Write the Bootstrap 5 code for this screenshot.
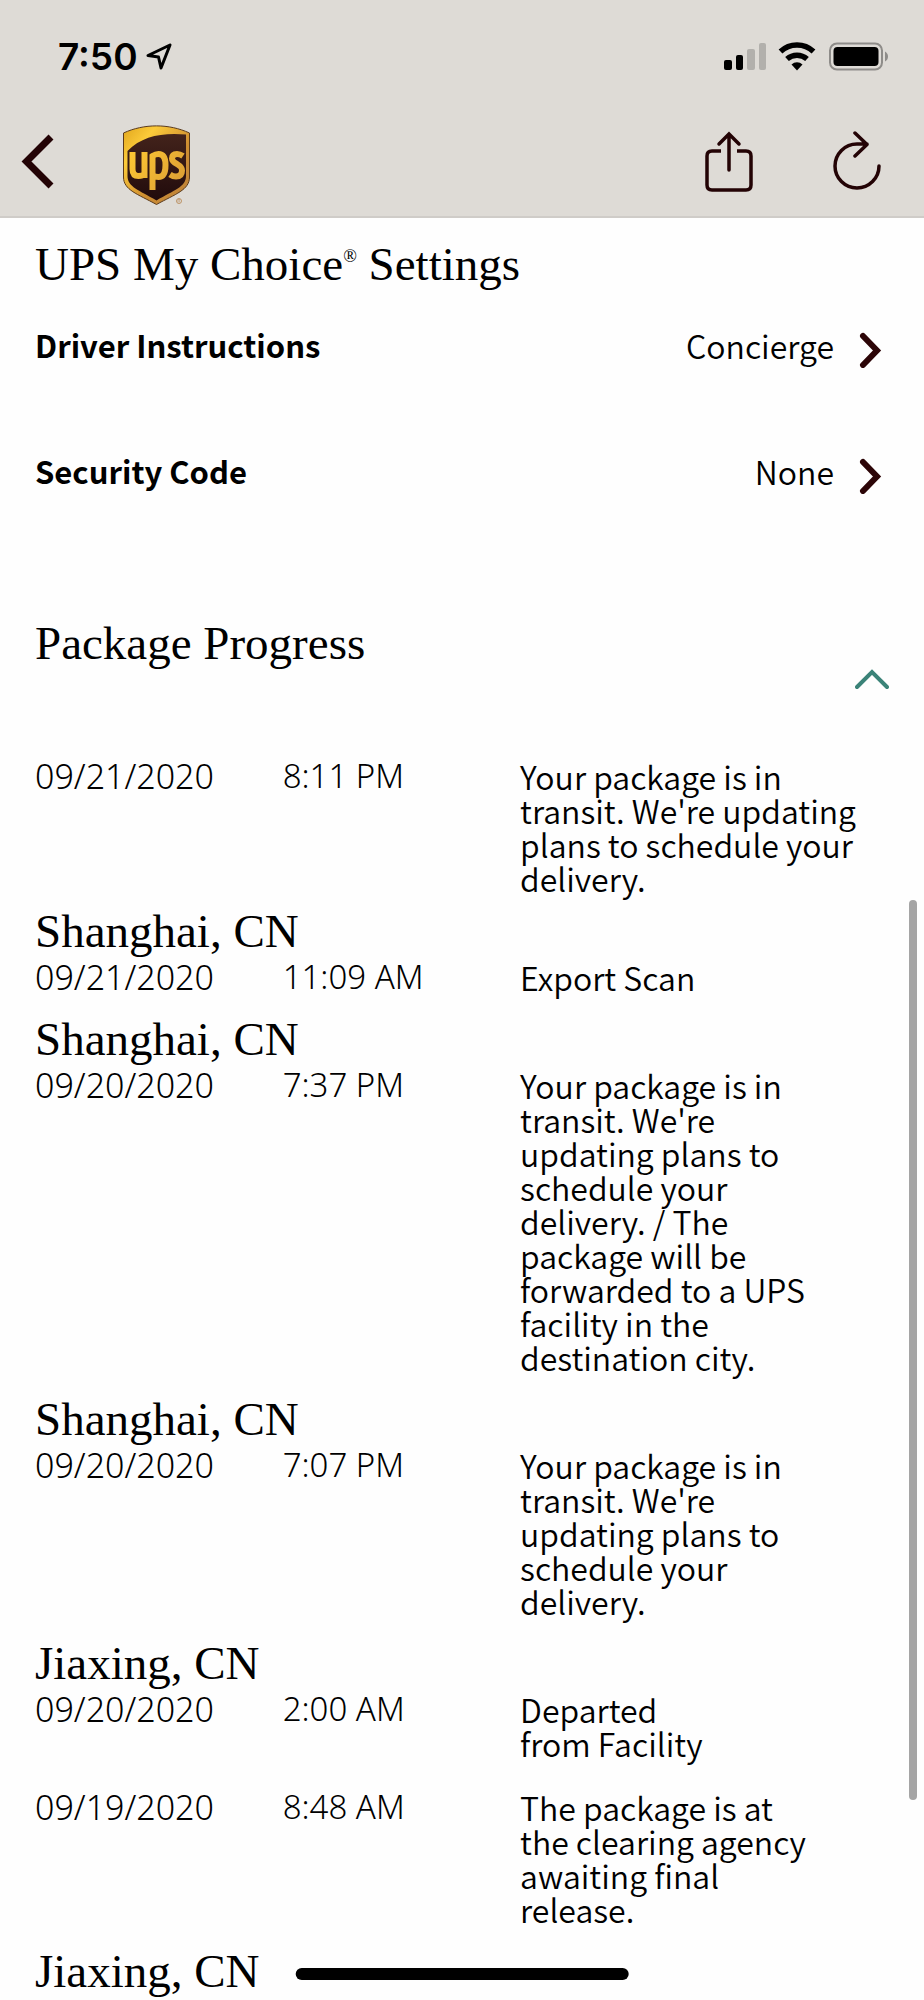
<!DOCTYPE html>
<html lang="en">
<head>
<meta charset="utf-8">
<meta name="viewport" content="width=device-width, initial-scale=1">
<title>UPS My Choice – Package Progress</title>
<link href="https://cdn.jsdelivr.net/npm/bootstrap@5.3.0/dist/css/bootstrap.min.css" rel="stylesheet">
<style>
  body { background: #fefefe; color: #000; font-family: "Noto Sans CJK SC", "Noto Sans", sans-serif; font-size: 32px; font-weight: 350; line-height: 34px; overflow-x: hidden; }
  svg { display: block; flex: none; }
  .app-header { background: #dedbd6; border-bottom: 2px solid #cfccc8; }
  .status-bar { height: 114px; padding: 0 35px 0 58px; font-family: Inter, sans-serif; font-size: 37px; font-weight: 600; }
  .tool-bar { height: 102px; padding: 0 42px 0 18px; }
  .tool-bar button, .toggle-btn { background: none; border: 0; padding: 0; color: #230305; }
  .tool-bar button { padding-bottom: 7px; }
  .refresh-btn { margin-left: 78px; }
  .app-main { padding: 18px 35px 0; }
  .serif-title { font-family: "Liberation Serif", serif; font-size: 47px; font-weight: 400; line-height: 56px; margin: 0; }
  .serif-title sup { font-size: 18px; line-height: 0; vertical-align: 18px; top: 0; }
  .setting-row { color: #000; text-decoration: none; height: 126px; padding: 36px 7px 0 0; }
  .setting-row b { font-weight: 700; font-size: 31px; }
  .setting-row svg { margin-top: 4px; }
  .progress-head { padding-top: 71px; min-height: 215px; }
  .toggle-btn { margin-top: 53px; color: #3b8378; }
  .progress-table { width: 100%; table-layout: fixed; }
  .progress-table th { font-weight: 400; padding: 17px 0 1px; }
  .progress-table .city-first th { padding: 8px 0 1px; }
  .progress-table td { padding: 0; vertical-align: top; }
  .progress-table .no-city td { padding-bottom: 30px; }
  .progress-table .stamp { font-family: "Noto Sans", sans-serif; font-size: 33px; font-weight: 300; }
  .progress-table .stamp-date { font-size: 34px; }
  .col-date { width: 29%; }
  .col-time { width: 27.8%; }
  .desc-narrow { max-width: 300px; }
  .scroll-thumb { top: 45%; right: 7px; width: 8px; height: 45%; background: #a5a5a5; }
  .home-bar { bottom: 20px; width: 36%; height: 12px; background: #000; }
</style>
</head>
<body>
<header class="app-header">
  <div class="status-bar d-flex align-items-center justify-content-between">
    <div class="d-flex align-items-center gap-2">
      <span>7:50</span>
      <svg width="28" height="28" viewBox="0 0 28 28" fill="none" stroke="#000" stroke-width="3" stroke-linejoin="round" aria-hidden="true"><path d="M24 2 2 12.500 12.500 14 15 25Z"/></svg>
    </div>
    <svg width="165" height="30" viewBox="0 0 165 30" aria-label="Signal, Wi-Fi and battery">
      <rect x="0" y="18" width="8" height="10" rx="2"/>
      <rect x="12" y="13" width="7" height="15" rx="2"/>
      <rect x="23" y="7" width="8" height="21" rx="2" fill="#b2b0ac"/>
      <rect x="35" y="1" width="7" height="27" rx="2" fill="#b2b0ac"/>
      <g fill="none" stroke="#000" stroke-width="5.500">
        <path d="M56.500 9.500a24 24 0 0 1 33 0"/>
        <path d="M63 17a15 15 0 0 1 20 0"/>
      </g>
      <path d="M73 28.500 67.500 22.500a8 8 0 0 1 11 0Z"/>
      <rect x="106" y="1.500" width="52" height="26" rx="7" fill="none" stroke="#8e8c89" stroke-width="2"/>
      <rect x="109.500" y="5" width="45" height="19" rx="4"/>
      <path d="M161 9.500c4 2 4 8 0 10Z" fill="#8e8c89"/>
    </svg>
  </div>
  <nav class="tool-bar d-flex align-items-center" aria-label="Toolbar">
    <button type="button" aria-label="Back"><svg width="40" height="60" viewBox="0 0 40 60" fill="none" stroke="currentColor" stroke-width="7"><path d="M33 5 8.500 29.500 33 54"/></svg></button>
    <svg class="ms-5" width="90" height="90" viewBox="0 0 90 90" role="img" aria-label="UPS">
      <defs>
        <linearGradient id="gold" x1="0" y1="0" x2="1" y2="1"><stop offset="0" stop-color="#e0a51c"/><stop offset=".25" stop-color="#fccb3a"/><stop offset=".6" stop-color="#cf8e31"/><stop offset="1" stop-color="#b9803c"/></linearGradient>
        <linearGradient id="letters" gradientUnits="userSpaceOnUse" x1="24" y1="30" x2="80" y2="70"><stop offset="0" stop-color="#ffc933"/><stop offset="1" stop-color="#d79a35"/></linearGradient>
        <linearGradient id="brown" x1="0" y1="0" x2="0" y2="1"><stop offset="0" stop-color="#43231b"/><stop offset="1" stop-color="#210b0c"/></linearGradient>
      </defs>
      <path d="M17.500 13C38 3.500 63 3.500 83.500 13v44c0 13-14 17-33 27.500C31.500 74 17.500 70 17.500 57Z" fill="url(#gold)" stroke="#5a3a1c"/>
      <path d="M21.500 31C36 16 56 12.500 80 14.500V56c0 11-12 14-29.500 24.500C33 70 21.500 67 21.500 56Z" fill="url(#brown)"/>
      <g fill="none" stroke="url(#letters)" stroke-width="6">
        <path d="M26.500 32v17q0 7 6 7 4 0 6-2M38.500 32v26"/>
        <path d="M46.500 70V36q3-2 6-2 7 0 7 11 0 12-7 12-3 0-6-2"/>
        <path d="M77 36q-3-2-6-2-5 0-5 4.500 0 3 5 5.500 5 3 5 6.500 0 6-6 6-3 0-6-2"/>
      </g>
      <circle cx="73" cy="81" r="2.500" fill="none" stroke="#bd9569"/><path d="M72 82.500v-3h2l-1 1.500 1 1.500" fill="none" stroke="#bd9569" stroke-width=".6"/>
    </svg>
    <button type="button" class="ms-auto" aria-label="Share"><svg width="50" height="62" viewBox="0 0 50 62" fill="none" stroke="currentColor" stroke-width="3.500" stroke-linecap="round"><path stroke-linecap="butt" d="M17 20H8q-5 0-5 5v29q0 5 5 5h34q5 0 5-5V25q0-5-5-5h-9"/><path d="M25 39V3M15 13 25 3l10 10"/></svg></button>
    <button type="button" class="refresh-btn" aria-label="Refresh"><svg width="50" height="62" viewBox="0 0 50 62" fill="none" stroke="currentColor" stroke-width="3.500" stroke-linecap="round" stroke-linejoin="round"><path d="M47 35a22 22 0 1 1-22-22h10M23 2l12 11.500L23 25"/></svg></button>
  </nav>
</header>

<main class="app-main">
  <section>
    <h1 class="serif-title">UPS My Choice<sup>®</sup> Settings</h1>
    <a href="#driver" class="setting-row d-flex align-items-start">
      <b>Driver Instructions</b><span class="ms-auto me-4">Concierge</span>
      <svg width="24" height="36" viewBox="0 0 24 36" fill="none" stroke="#2c0507" stroke-width="6" stroke-linecap="round"><path d="M5 4 19 18.500 5 33"/></svg>
    </a>
    <a href="#security" class="setting-row d-flex align-items-start">
      <b>Security Code</b><span class="ms-auto me-4">None</span>
      <svg width="24" height="36" viewBox="0 0 24 36" fill="none" stroke="#2c0507" stroke-width="6" stroke-linecap="round"><path d="M5 4 19 18.500 5 33"/></svg>
    </a>
  </section>

  <section>
    <div class="progress-head d-flex justify-content-between align-items-start">
      <h2 class="serif-title">Package Progress</h2>
      <button type="button" class="toggle-btn" aria-label="Collapse package progress" aria-expanded="true"><svg width="34" height="22" viewBox="0 0 34 22" fill="none" stroke="currentColor" stroke-width="4" stroke-linecap="round"><path d="M2 19 17 4l15 15"/></svg></button>
    </div>
    <table class="progress-table">
      <colgroup><col class="col-date"><col class="col-time"><col></colgroup>
      <tbody>
        <tr><td class="stamp stamp-date">09/21/2020</td><td class="stamp">8:11 PM</td><td>Your package is in transit. We're updating plans to schedule your delivery.</td></tr>
        <tr class="city-first"><th colspan="3" class="serif-title">Shanghai, CN</th></tr>
        <tr><td class="stamp stamp-date">09/21/2020</td><td class="stamp">11:09 AM</td><td>Export Scan</td></tr>
        <tr><th colspan="3" class="serif-title">Shanghai, CN</th></tr>
        <tr><td class="stamp stamp-date">09/20/2020</td><td class="stamp">7:37 PM</td><td><div class="desc-narrow">Your package is in transit. We're updating plans to schedule your delivery. / The package will be forwarded to a UPS facility in the destination city.</div></td></tr>
        <tr><th colspan="3" class="serif-title">Shanghai, CN</th></tr>
        <tr><td class="stamp stamp-date">09/20/2020</td><td class="stamp">7:07 PM</td><td><div class="desc-narrow">Your package is in transit. We're updating plans to schedule your delivery.</div></td></tr>
        <tr><th colspan="3" class="serif-title">Jiaxing, CN</th></tr>
        <tr class="no-city"><td class="stamp stamp-date">09/20/2020</td><td class="stamp">2:00 AM</td><td><div class="desc-narrow">Departed from&nbsp;Facility</div></td></tr>
        <tr><td class="stamp stamp-date">09/19/2020</td><td class="stamp">8:48 AM</td><td><div class="desc-narrow">The package is at the clearing agency awaiting final release.</div></td></tr>
        <tr><th colspan="3" class="serif-title">Jiaxing, CN</th></tr>
      </tbody>
    </table>
  </section>
</main>
<div class="scroll-thumb position-fixed rounded-pill"></div>
<div class="home-bar position-fixed start-50 translate-middle-x rounded-pill"></div>
<script src="https://cdn.jsdelivr.net/npm/bootstrap@5.3.0/dist/js/bootstrap.bundle.min.js"></script>
</body>
</html>
